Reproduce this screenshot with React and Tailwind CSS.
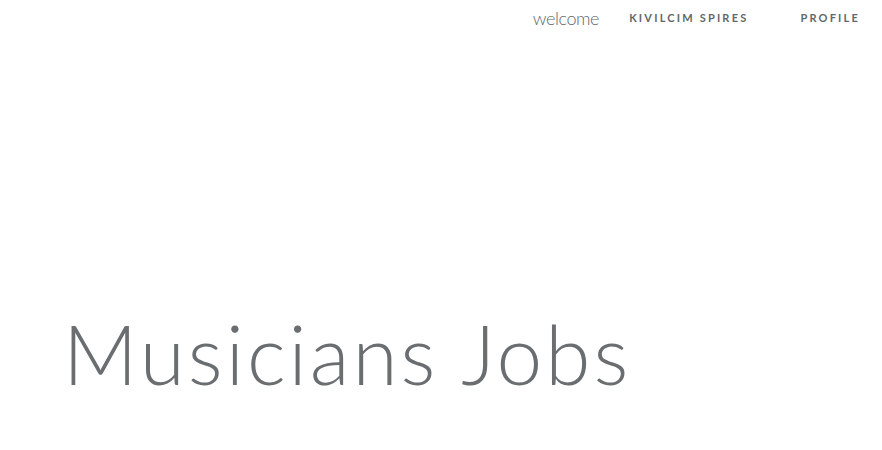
export default function App() {
	return (
		<div className="w-[882px] h-[450px] bg-white overflow-hidden font-['Lato',sans-serif] text-[#62676a]">
			{/* Top nav */}
			<nav className="flex justify-end items-center h-[36px] pr-[22px]">
				<span className="text-[18px] font-light tracking-[-0.4px] mr-[30px]">welcome</span>
				<span className="text-[11px] font-bold tracking-[2.2px] mr-[52px]">KIVILCIM SPIRES</span>
				<span className="text-[11px] font-bold tracking-[2.2px]">PROFILE</span>
			</nav>
			{/* Title */}
			<h1 className="mt-[276px] pl-[63px] text-[82px] leading-none font-light tracking-[3px] text-[#6a6e70]">
				Musicians Jobs
			</h1>
		</div>
	);
}
